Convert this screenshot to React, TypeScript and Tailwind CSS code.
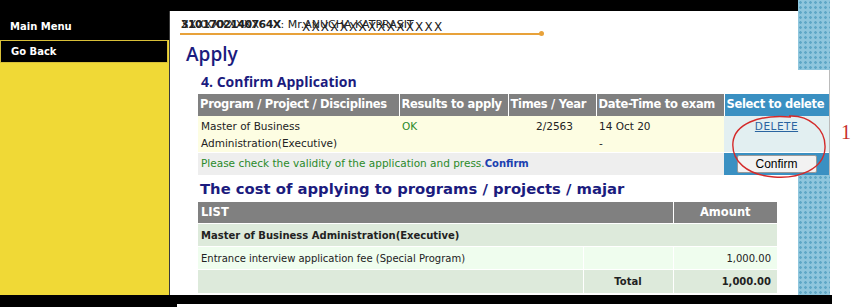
import React from "react";

const navy = "text-[#1b1b7e]";

function Sidebar() {
  return (
    <aside className="w-[169px] shrink-0 bg-[#f0d936] flex flex-col">
      <div className="bg-black h-[29px] flex items-center pl-[10px] text-white text-[10px] font-bold pt-[2px]">
        Main Menu
      </div>
      <div className="bg-black h-[23px] w-[168px] border border-[#d8bf38] flex items-center pl-[10px] text-white text-[10px] font-bold">
        Go Back
      </div>
    </aside>
  );
}

function ConfirmTable() {
  return (
    <table className="border-collapse text-[10.5px] w-[631px] table-fixed">
      <thead>
        <tr className="h-[22px] text-white font-bold text-[11.5px] whitespace-nowrap tracking-[-0.3px]">
          <th className="bg-[#808080] border-r border-white text-left pl-[2px] w-[201px] font-bold">Program / Project / Disciplines</th>
          <th className="bg-[#808080] border-r border-white text-left pl-[2px] w-[109px]">Results to apply</th>
          <th className="bg-[#808080] border-r border-white text-left pl-[2px] w-[88px]">Times / Year</th>
          <th className="bg-[#808080] border-r border-white text-left pl-[2px] w-[128px]">Date-Time to exam</th>
          <th className="bg-[#3a90c2] text-left pl-[2px]">Select to delete</th>
        </tr>
      </thead>
      <tbody>
        <tr className="h-[35px] align-top">
          <td className="bg-[#fdfde2] pl-[3px] pt-[2px] leading-[17px] text-[#222]">
            Master of Business<br />Administration(Executive)
          </td>
          <td className="bg-[#fdfde2] pl-[3px] pt-[2px] leading-[17px] text-[#2a8a2a]">OK</td>
          <td className="bg-[#fdfde2] pl-[28px] pt-[2px] leading-[17px] text-[#222]">2/2563</td>
          <td className="bg-[#fdfde2] pl-[3px] pt-[2px] leading-[17px] text-[#222]">
            14 Oct 20<br />-
          </td>
          <td className="bg-[#e2eff1] text-center pt-[2px] leading-[17px]">
            <span className="text-[#2a64a0] underline tracking-[0.5px]">DELETE</span>
          </td>
        </tr>
        <tr className="h-[22px] border-t border-white">
          <td colSpan={4} className="bg-[#eeeeee] pl-[3px] text-[#2a8a2a]">
            Please check the validity of the application and press.
            <span className="text-[#1a3fb0] font-bold text-[10px]">Confirm</span>
          </td>
          <td className="bg-[#3a90c2] text-center">
            <button className="w-[80px] h-[18px] bg-[#f2f2f2] border border-[#999] rounded-[2px] text-[12px] leading-[16px] text-black font-['Liberation_Sans',sans-serif]">
              Confirm
            </button>
          </td>
        </tr>
      </tbody>
    </table>
  );
}

function CostTable() {
  return (
    <table className="border-collapse text-[10px] w-[579px]">
      <thead>
        <tr className="h-[22px] text-white font-bold text-[11.5px]">
          <th colSpan={2} className="bg-[#808080] border-r border-white text-left pl-[3px]">LIST</th>
          <th className="bg-[#808080] text-center w-[104px]">Amount</th>
        </tr>
      </thead>
      <tbody>
        <tr className="h-[23px] border-t border-white bg-[#ddeadb]">
          <td colSpan={3} className="pl-[3px] font-bold text-[#222]">Master of Business Administration(Executive)</td>
        </tr>
        <tr className="h-[23px] border-t border-white bg-[#effdee]">
          <td className="pl-[3px] text-[#222] border-r border-white w-[385px]">Entrance interview application fee (Special Program)</td>
          <td className="border-r border-white"></td>
          <td className="text-right pr-[6px] text-[#222]">1,000.00</td>
        </tr>
        <tr className="h-[23px] border-t border-white bg-[#ddeadb]">
          <td className="border-r border-white"></td>
          <td className="border-r border-white text-center font-bold text-[#222]">Total</td>
          <td className="text-right pr-[6px] font-bold text-[#222]">1,000.00</td>
        </tr>
      </tbody>
    </table>
  );
}

function Main() {
  return (
    <main className="flex-1 bg-white border-l border-[#3a3a3a] flex flex-col">
      <div className="relative ml-[11px] mt-[5px] h-[17px] text-[11px] text-[#222] leading-[17px] whitespace-nowrap">
        <span className="font-bold tracking-[-0.6px]">3101702140764X</span>
        <span>: Mr.ANUCHA KATPRASIT</span>
        <span className="absolute left-0 top-0 tracking-[0.3px] text-[#222]">XXXXXXXXXX</span>
        <span className="absolute left-[121px] top-[3px] tracking-[1.2px] text-[12px]">XXXXXXXXXXXXXXX</span>
      </div>
      <div className="ml-[10px] mt-[0px] w-[362px] h-[2px] bg-[#e8a23a] relative shrink-0">
        <span className="absolute right-[-2px] top-[-2px] w-[5px] h-[5px] rounded-full bg-[#e8a23a]" />
      </div>
      <h1 className={`ml-[16px] mt-[8px] text-[19px] leading-[22px] font-semibold ${navy} font-['Open_Sans',sans-serif]`}>Apply</h1>
      <section className="relative z-10 mt-[5px] ml-[16px] w-[644px] bg-white border-r border-[#bbb] pl-[12px]">
        <h2 className={`pl-[3px] pt-[2px] text-[14px] leading-[20px] font-bold ${navy} font-['Open_Sans',sans-serif]`}>4. Confirm Application</h2>
        <div className="mt-[2px]">
          <ConfirmTable />
        </div>
      </section>
      <h2 className={`ml-[30px] mt-[4px] text-[14.8px] leading-[20px] font-bold ${navy} whitespace-nowrap`}>
        The cost of applying to programs / projects / majar
      </h2>
      <div className="ml-[28px] mt-[3px]">
        <CostTable />
      </div>
    </main>
  );
}

export default function App() {
  return (
    <div className="relative w-[858px] h-[307px] bg-white overflow-hidden font-['DejaVu_Sans',sans-serif]">
      <div className="flex">
        <div className="w-[798px] flex flex-col">
          <div className="h-[11px] bg-black" />
          <div className="flex h-[284px]">
            <Sidebar />
            <Main />
          </div>
        </div>
        <div className="w-[32px] h-[295px] bg-[#8fc6dd] bg-[radial-gradient(circle,#5fa7c6_1px,transparent_1.6px)] bg-size-[5px_5px]" />
      </div>
      <div className="relative z-20 h-[9px] w-[832px] bg-black" />
      <div className="h-[3px] w-[177px] bg-black" />

      <svg className="absolute z-20 left-[727px] top-[111px]" width="102" height="72" viewBox="0 0 102 72">
        <path
          d="M62 5 C82 4 99 18 98 37 C97 58 72 68 47 66 C20 64 4 50 6 31 C8 14 30 3 64 6"
          fill="none"
          stroke="#d42a2a"
          strokeWidth="1.4"
        />
      </svg>
      <span className="absolute left-[841px] top-[117px] text-[20px] text-[#c8312b] font-['Liberation_Serif',serif]">1</span>
    </div>
  );
}
